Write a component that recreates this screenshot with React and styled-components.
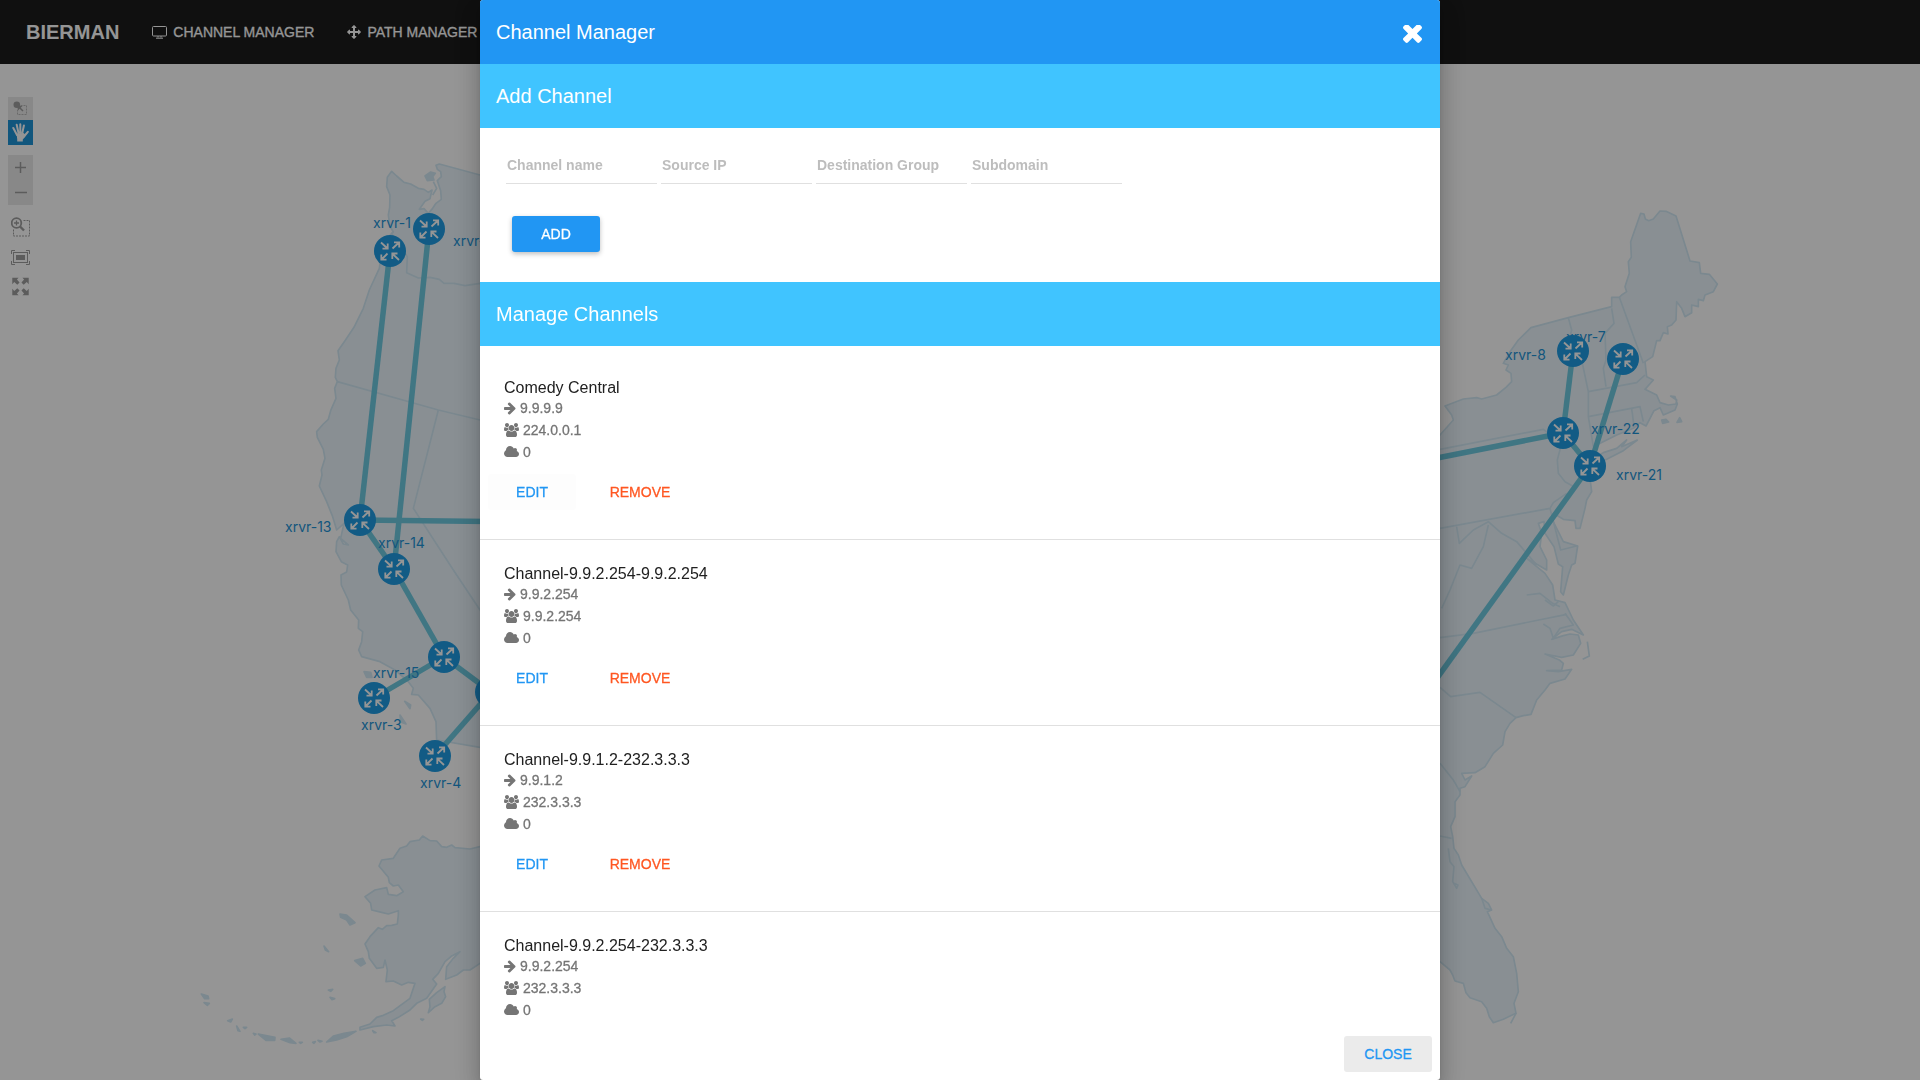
import React from "react";
import styled, { createGlobalStyle, css } from "styled-components";

const GlobalStyle = createGlobalStyle`
  *, *::before, *::after { box-sizing: border-box; }
  body {
    margin: 0;
    background: #fff;
    font-family: "Liberation Sans", Arial, sans-serif;
    font-size: 14px;
  }
  button, input { font: inherit; }
`;

/* Halfway between the regular and the bold face. */
const medium = css`
  -webkit-text-stroke: 0.02em currentColor;
`;

/* ---------- page behind the dialog ---------- */

const Page = styled.div`
  height: 100vh;
  overflow: hidden;
  display: flex;
  flex-direction: column;
`;

const NavBar = styled.nav`
  display: flex;
  align-items: center;
  flex: none;
  height: 64px;
  padding: 0 26px;
  gap: 33px;
  background: #000;
  color: #fff;
`;

const Brand = styled.a`
  color: inherit;
  text-decoration: none;
  font-size: 20px;
  line-height: 24px;
  font-weight: 700;
`;

const NavLink = styled.a`
  ${medium}
  display: flex;
  align-items: center;
  gap: 6px;
  color: inherit;
  text-decoration: none;
  white-space: nowrap;
`;

const Stage = styled.main`
  position: relative;
  flex: 1;
  min-height: 0;
`;

const Topology = styled.svg`
  display: block;
  width: 100%;
`;

const NodeLabel = styled.text`
  font-family: Inter, sans-serif;
  font-size: 14px;
  fill: #0587d2;
`;

const ToolBar = styled.div`
  position: absolute;
  top: 33px;
  left: 8px;
  width: 25px;
  display: flex;
  flex-direction: column;
  gap: 10px;
`;

const ToolGroup = styled.div`
  display: flex;
  flex-direction: column;
  background: ${(p) => (p.$plain ? "transparent" : "#e6e6e6")};
`;

const ToolButton = styled.button`
  display: grid;
  place-items: center;
  width: 25px;
  height: ${(p) => p.$height || 25}px;
  padding: 0;
  border: 0;
  color: ${(p) => (p.$active ? "#fff" : "#939393")};
  background: ${(p) => (p.$active ? "#0386d2" : "transparent")};
`;

/* ---------- dialog ---------- */

const Backdrop = styled.div`
  position: fixed;
  inset: 0;
  display: flex;
  justify-content: center;
  background: rgba(33, 33, 33, 0.48);
`;

const Dialog = styled.section`
  display: flex;
  flex-direction: column;
  width: 50%;
  height: 100%;
  overflow: hidden;
  border-radius: 3px;
  background: #fff;
  box-shadow: 0 7px 8px -4px rgba(0, 0, 0, 0.2),
    0 13px 19px 2px rgba(0, 0, 0, 0.14), 0 5px 24px 4px rgba(0, 0, 0, 0.12);
`;

const Bar = styled.header`
  display: flex;
  align-items: center;
  justify-content: space-between;
  flex: none;
  height: 64px;
  padding: 0 16px;
  color: #fff;
  background: ${(p) => (p.$primary ? "#2196f3" : "#40c4ff")};
`;

const BarTitle = styled.h2`
  margin: 0;
  font-size: 20px;
  line-height: 24px;
  font-weight: 400;
`;

const IconButton = styled.button`
  display: grid;
  place-items: center;
  width: 24px;
  height: 24px;
  padding: 4px 0 0;
  border: 0;
  background: none;
  color: inherit;
`;

const Body = styled.div`
  flex: 1;
  min-height: 0;
  overflow-y: auto;
  scrollbar-width: none;
`;

const Form = styled.form`
  padding: 24px 26px 30px;
`;

const Fields = styled.div`
  display: flex;
  gap: 4px;
`;

const Field = styled.input`
  width: 151px;
  height: 32px;
  padding: 0 1px 6px;
  border: 0;
  border-bottom: 1px solid #e0e0e0;
  background: none;
  font-weight: 700;
  line-height: 18px;
  &::placeholder {
    color: #bdbdbd;
    opacity: 1;
  }
`;

const Button = styled.button`
  ${medium}
  min-width: 88px;
  height: 36px;
  padding: 0 6px;
  border: 0;
  border-radius: 3px;
  line-height: 36px;
  text-transform: uppercase;
  color: ${(p) => (p.$warn ? "#ff5722" : "#2196f3")};
  background: ${(p) => p.$fill || "transparent"};
`;

const RaisedButton = styled(Button)`
  margin: 32px 6px 0;
  color: #fff;
  background: #2196f3;
  box-shadow: 0 2px 5px rgba(0, 0, 0, 0.26);
`;

const List = styled.ul`
  margin: 0;
  padding: 8px 0;
  list-style: none;
`;

const Item = styled.li`
  height: 186px;
  padding: 23px 24px 0;
  border-bottom: 1px solid #e0e0e0;
`;

const ItemTitle = styled.h3`
  margin: 0;
  padding-top: 2px;
  font-size: 16px;
  line-height: 18px;
  font-weight: 400;
  color: #212121;
`;

const Detail = styled.p`
  ${medium}
  display: flex;
  align-items: center;
  gap: 4px;
  margin: 0;
  line-height: 22px;
  color: #757575;
`;

const ItemActions = styled.div`
  display: flex;
  gap: 20px;
  margin: 11px -16px 0;
`;

const Footer = styled.footer`
  display: flex;
  justify-content: flex-end;
  flex: none;
  padding: 8px;
`;

/* ---------- icons ---------- */

const Glyph = ({ box, w, h, d }) => (
  <svg viewBox={box} width={w} height={h} fill="currentColor" aria-hidden="true">
    <path d={d} />
  </svg>
);

const ArrowIcon = () => (
  <Glyph
    box="0 128 1536 1664"
    w={12}
    h={13}
    d="M1472 960q0 54-37 91l-651 651q-39 37-91 37-51 0-90-37l-75-75q-38-38-38-91t38-91l293-293h-704q-52 0-84.500-37.500t-32.500-90.500v-128q0-53 32.500-90.500t84.500-37.500h704l-293-294q-38-36-38-90t38-90l75-75q38-38 90-38 53 0 91 38l651 651q37 35 37 90z"
  />
);

const UsersIcon = () => (
  <Glyph
    box="0 0 1920 1792"
    w={15}
    h={14}
    d="M593 896q-162 5-265 128h-134q-82 0-138-40.500t-56-118.500q0-353 124-353 6 0 43.500 21t97.500 42.500 119 21.500q67 0 133-23-5 37-5 66 0 139 81 256zM1664 1533q0 120-73 189.500t-194 69.500h-874q-121 0-194-69.500t-73-189.500q0-53 3.500-103.500t14-109 26.500-108.500 43-97.500 62-81 85.500-53.500 111.500-20q10 0 43 21.500t73 48 107 48 135 21.500 135-21.500 107-48 73-48 43-21.500q61 0 111.500 20t85.500 53.500 62 81 43 97.500 26.500 108.500 14 109 3.500 103.500zM640 256q0 106-75 181t-181 75-181-75-75-181 75-181 181-75 181 75 75 181zM1344 640q0 159-112.500 271.500t-271.500 112.500-271.500-112.500-112.500-271.500 112.500-271.500 271.500-112.500 271.500 112.500 112.500 271.500zM1920 865q0 78-56 118.500t-138 40.500h-134q-103-123-265-128 81-117 81-256 0-29-5-66 66 23 133 23 59 0 119-21.500t97.500-42.500 43.500-21q124 0 124 353zM1792 256q0 106-75 181t-181 75-181-75-75-181 75-181 181-75 181 75 75 181z"
  />
);

const CloudIcon = () => (
  <Glyph
    box="0 128 1920 1792"
    w={15}
    h={14}
    d="M1920 1280q0 159-112.500 271.500t-271.500 112.500h-1088q-185 0-316.500-131.500t-131.500-316.500q0-130 70-240t188-165q-2-30-2-43 0-212 150-362t362-150q156 0 285.500 87t188.500 231q71-62 166-62 106 0 181 75t75 181q0 76-41 138 130 31 213.500 135.500t83.500 238.500z"
  />
);

const CloseIcon = () => (
  <Glyph
    box="110 434 1188 1188"
    w={19}
    h={19}
    d="M1298 1322q0 40-28 68l-136 136q-28 28-68 28t-68-28l-294-294-294 294q-28 28-68 28t-68-28l-136-136q-28-28-28-68t28-68l294-294-294-294q-28-28-28-68t28-68l136-136q28-28 68-28t68 28l294 294 294-294q28-28 68-28t68 28l136 136q28 28 28 68t-28 68l-294 294 294 294q28 28 28 68z"
  />
);

const MoveIcon = () => (
  <Glyph
    box="0 0 1792 1792"
    w={14}
    h={14}
    d="M1792 896q0 26-19 45l-256 256q-19 19-45 19t-45-19-19-45v-128h-384v384h128q26 0 45 19t19 45-19 45l-256 256q-19 19-45 19t-45-19l-256-256q-19-19-19-45t19-45 45-19h128v-384h-384v128q0 26-19 45t-45 19-45-19l-256-256q-19-19-19-45t19-45l256-256q19-19 45-19t45 19 19 45v128h384v-384h-128q-26 0-45-19t-19-45 19-45l256-256q19-19 45-19t45 19l256 256q19 19 19 45t-19 45-45 19h-128v384h384v-128q0-26 19-45t45-19 45 19l256 256q19 19 19 45z"
  />
);

const MonitorIcon = () => (
  <svg width="15" height="13" viewBox="0 0 15 13" fill="none" stroke="currentColor" aria-hidden="true">
    <rect x=".5" y=".5" width="14" height="9.500" rx="1" />
    <path d="M6 10v1.500M9 10v1.500M4 12.200h7" />
  </svg>
);

const HandIcon = () => (
  <svg width="17" height="19" viewBox="0 0 17 19" fill="none" stroke="currentColor" strokeLinecap="round" aria-hidden="true">
    <path d="M4.500 10.500 11.500 10 14 12l-1.500 2.500-1.700 2V18.500H5.200V16Z" fill="currentColor" stroke="none" />
    <path d="M1.300 5 5 12M4.700 1.800 6.500 10M8.300 1.200V10M11.900 2.500 10.300 10" strokeWidth="2" />
    <path d="M15.800 8.800 12 13.500" strokeWidth="2" />
  </svg>
);

const SelectIcon = () => (
  <svg width="15" height="15" viewBox="0 0 15 15" fill="none" stroke="currentColor" aria-hidden="true">
    <rect x="4.500" y="4.500" width="9" height="9" strokeDasharray="2 1" strokeWidth=".7" />
    <circle cx="3.800" cy="3.800" r="3.300" fill="currentColor" stroke="none" />
    <path d="M4 4l6 6" strokeWidth="1.500" />
    <path d="M5 9.500V5h4.500Z" fill="currentColor" stroke="none" />
  </svg>
);

const PlusIcon = () => (
  <svg width="11" height="11" viewBox="0 0 11 11" stroke="currentColor" strokeWidth="1.500" aria-hidden="true">
    <path d="M0 5.500h11M5.500 0v11" />
  </svg>
);

const MinusIcon = () => (
  <svg width="12" height="3" viewBox="0 0 12 3" stroke="currentColor" strokeWidth="1.500" aria-hidden="true">
    <path d="M0 1.500h12" />
  </svg>
);

const ZoomAreaIcon = () => (
  <svg width="19" height="20" viewBox="0 0 19 20" fill="none" stroke="currentColor" aria-hidden="true">
    <path d="M12.500 3.500h6v15.500h-16V12" strokeDasharray="2 1" />
    <circle cx="5.500" cy="6" r="4.800" strokeWidth="1.800" />
    <path d="M3 6h5M5.500 3.500v5" strokeWidth="1.300" />
    <path d="M9 9.500l4 4" strokeWidth="2.400" />
  </svg>
);

const FitIcon = () => (
  <svg width="19" height="15" viewBox="0 0 19 15" fill="none" stroke="currentColor" aria-hidden="true">
    <path d="M.5 4V.5H4M15 .5h3.500V4M18.500 11v3.500H15M4 14.500H.5V11" />
    <rect x="2.500" y="2.500" width="14" height="10" />
    <rect x="5.500" y="5.500" width="8" height="4" fill="currentColor" />
  </svg>
);

const ExpandIcon = () => (
  <svg width="17" height="19" viewBox="0 0 18 19" fill="currentColor" aria-hidden="true">
    {[0, 1, 2, 3].map((i) => (
      <path
        key={i}
        d="M.3.3H7L5.200 2.200 8 5.200 5.600 7.600 2.400 4.800.3 7Z"
        transform={`translate(${i % 2 ? 18 : 0} ${i > 1 ? 19 : 0}) scale(${i % 2 ? -1 : 1} ${i > 1 ? -1 : 1})`}
      />
    ))}
  </svg>
);

/* ---------- map ---------- */

/* The map sheets are digitised at three units to the pixel; each sheet has its own origin. */
const SHEETS = {
  nw: [0, 0],
  west: [840, 720],
  sw: [840, 1680],
  ak: [540, 2340],
  ne: [4290, 540],
  se: [4290, 1800],
};

const trace = (...runs) =>
  "M" +
  runs
    .map(([sheet, points]) =>
      points
        .split(" ")
        .map((p) => {
          const [x, y] = p.split(",").map(Number);
          return `${x + SHEETS[sheet][0]} ${y + SHEETS[sheet][1]}`;
        })
        .join("L")
    )
    .join("L");

const LAND = [
  trace(
    ["nw", "1560,555 1440,525 1318,492 1308,496 1312,508 1322,515 1324,530 1312,542 1322,572 1324,598 1308,610 1298,625 1285,640 1272,626 1258,628 1275,604 1290,596 1296,570 1285,577 1272,568 1255,565 1232,552 1212,547 1190,528 1175,514 1162,532 1160,560 1170,585 1169,622 1165,645 1170,680 1180,695 1165,712 1158,750 1140,790"],
    ["west", "298,85 268,150 250,205 222,262 195,302 174,332 178,360 168,385 166,412 172,425 164,445 168,475 152,512 145,538 130,552 110,575 112,592 130,628 135,655 124,690 126,705 118,738 140,785 158,830 170,870 192,850 182,895 205,915 190,912 178,890 170,905 168,935 184,965 203,975"],
    ["sw", "200,36 183,45 184,75 205,120 212,150 236,180 235,205 248,215 245,245 236,270 245,290 300,305 345,330 385,365 400,385 395,403 415,405 450,445 468,485 470,540 600,562 720,575"]
  ) + "Z",
  trace([
    "ak",
    "980,200 900,200 870,207 825,203 815,195 800,202 785,200 770,183 750,182 728,168 718,180 690,185 680,198 660,205 640,235 605,240 597,258 625,292 628,308 640,318 655,315 670,335 650,347 625,343 620,323 585,330 555,350 572,370 575,390 605,397 625,402 655,392 655,405 652,432 635,436 620,437 607,448 595,443 570,470 555,492 565,515 568,535 590,565 610,562 615,540 622,570 618,605 640,603 665,615 685,607 705,610 690,655 640,692 610,706 590,712 570,732 540,742 540,750 580,740 620,735 645,738 635,722 655,712 690,690 710,670 740,655 770,612 758,598 775,580 795,545 815,528 840,515 820,535 800,560 797,598 830,585 850,570 870,570 900,550 980,540",
  ]) + "Z",
  trace(["ak", "795,620 770,638 748,658 750,680 745,698 765,680 785,670 797,650 792,635"]) + "Z",
  trace(
    ["ne", "-60,830 30,765 70,720 65,705 45,678 100,657 140,653 155,657 200,645 228,622 245,605 243,580 228,570 235,555 220,550 240,515 265,480 303,443 415,413 545,380 545,352 568,352 575,345 590,335 585,320 598,280 595,245 604,232 602,185 632,100 642,102 646,117 656,122 670,117 690,93 708,94 738,108 780,243 808,248 812,280 838,283 862,312 850,335 825,345 820,362 805,358 805,380 785,375 785,398 765,410 755,385 740,365 738,420 725,435 712,440 714,462 700,458 690,482 680,482 668,530 645,545 650,590 670,600 645,628 680,645 690,668 715,675 738,672 740,660 722,648 735,650 742,672 735,690 700,705 690,683 672,692 660,715 648,738 630,728 610,745 560,765 500,795 490,840 478,880 485,935 470,960 465,985 450,1045 438,1045 435,1022 400,1018 370,1000 365,1015 380,1045 400,1085 443,1098 435,1150 425,1155 415,1185 400,1245 392,1235 398,1160 385,1152 372,1100 345,1060 342,1025 325,1030 335,1060 330,1100 350,1140 350,1170 290,1135 345,1180 368,1215 375,1260 405,1268"],
    ["se", "430,60 460,105 425,88 395,95 365,118 400,107 420,102 445,105 452,130 430,165 395,172 345,162 388,180 400,190 395,210 350,212 385,215 425,208 405,237 360,250 345,270 320,300 303,343 280,347 258,353 240,370 225,395 218,435 190,460 165,500 135,518 95,520 105,540 125,528 105,560 90,565 90,585 75,605 75,650 62,680 68,710 72,745 85,765 95,795 155,895 175,910 185,930 172,935 195,985 215,1010 230,1045 250,1070 260,1120 265,1175 252,1210 258,1240 240,1248 220,1258 190,1268 178,1250 170,1225 155,1205 120,1193 108,1178 100,1150 75,1143 68,1125 60,1110 30,1085 -60,1040"]
  ) + "Z",
  trace(["ne", "497,830 520,818 560,805 590,780 575,800 622,780 580,812 530,838 505,842"]) + "Z",
];

const BORDERS = [
  trace(["nw", "1180,695 1175,702 1222,770 1220,818 1255,834 1290,832 1318,838 1332,850 1362,850 1395,857 1440,850 1520,855"]),
  trace(["west", "172,425 475,510 600,540 680,560"]),
  trace(["west", "475,510 400,805 520,990"], ["sw", "600,150 680,260"]),
  trace(["nw", "1300,545 1310,565 1298,585"]),
  trace(["ne", "30,808 340,748 395,790 382,840 385,880 405,905 440,925"]),
  trace(["ne", "415,413 425,450 420,470 455,540 475,635 475,710 490,800"]),
  trace(["ne", "475,635 620,608 645,585"]),
  trace(["ne", "475,710 630,680 640,725"]),
  trace(["ne", "605,685 612,740"]),
  trace(["ne", "545,385 552,430 525,460 528,540 520,565 528,620"]),
  trace(["ne", "568,352 640,550"]),
  trace(["ne", "30,1045 360,985 370,968 410,940"]),
  trace(["ne", "360,985 392,1110 440,1098"]),
  trace(["ne", "80,1040 88,1090 130,1050 175,1025 215,1060 260,1085 290,1120 320,1155"]),
  trace(["ne", "175,1035 160,1100 125,1165 90,1155 60,1230 35,1285"]),
  trace(["ne", "290,1245 330,1240 368,1270 390,1280"]),
  trace(["se", "30,113 130,100 410,43"]),
  trace(["se", "345,0 370,18 385,5"]),
  trace(["se", "340,72 360,85 370,115 390,85 430,75 405,40"]),
  trace(["se", "30,262 62,290 150,277 258,353"]),
  trace(["se", "30,490 70,540 90,575"]),
  trace(["se", "30,708 65,715"]),
  trace(["se", "55,745 60,785 72,800 68,845 80,865 84,855 72,850"]),
  trace(["se", "472,125 478,168 458,178"]),
  trace(["se", "258,1240 242,1270"]),
  trace(["se", "155,895 165,925 185,930"]),
];

const ISLANDS = [
  ["nw", "1275,528 1292,516 1306,520 1298,530 1302,540 1282,542"],
  ["sw", "252,335 272,337 276,352 260,352"],
  ["sw", "374,424 392,435 390,446"],
  ["sw", "360,465 378,492 362,486"],
  ["ak", "480,402 500,405 525,428 510,435 500,420 482,412"],
  ["ak", "432,498 446,515 436,510"],
  ["ak", "524,542 548,535 556,550 542,558"],
  ["ak", "445,630 458,628 452,634"],
  ["ak", "450,652 464,656 456,659"],
  ["ak", "64,642 84,648 86,656 74,656"],
  ["ak", "72,668 88,670 82,676"],
  ["ak", "143,722 157,717 152,726"],
  ["ak", "170,738 180,754 174,752"],
  ["ak", "190,742 200,742 195,746"],
  ["ak", "220,760 228,762 224,765"],
  ["ak", "235,762 285,772 284,781 258,781"],
  ["ak", "303,778 328,774 348,790 330,788"],
  ["ak", "358,787 367,787 362,790"],
  ["ak", "398,787 406,785 402,790"],
  ["ak", "414,781 426,784 420,786"],
  ["ak", "440,786 460,768 492,760 528,754 500,770 470,780"],
  ["ak", "578,752 588,758 582,758"],
  ["ak", "722,717 731,718 727,721"],
  ["ne", "695,720 708,718 716,726 698,730"],
  ["ne", "741,727 749,713 755,725"],
].map((run) => trace(run) + "Z");

const NODES = [
  { x: 390, y: 251, label: "xrvr-1", lx: 373, ly: 228 },
  { x: 429, y: 229, label: "xrvr-2", lx: 453, ly: 246 },
  { x: 360, y: 520, label: "xrvr-13", lx: 285, ly: 532 },
  { x: 394, y: 569, label: "xrvr-14", lx: 378, ly: 548 },
  { x: 444, y: 657, label: "xrvr-15", lx: 373, ly: 678 },
  { x: 374, y: 698, label: "xrvr-3", lx: 361, ly: 730 },
  { x: 435, y: 756, label: "xrvr-4", lx: 420, ly: 788 },
  { x: 491, y: 692 },
  { x: 1573, y: 351, label: "xrvr-8", lx: 1505, ly: 360 },
  { x: 1623, y: 359, label: "xrvr-7", lx: 1566, ly: 342 },
  { x: 1563, y: 433, label: "xrvr-22", lx: 1591, ly: 434 },
  { x: 1590, y: 466, label: "xrvr-21", lx: 1616, ly: 480 },
  { x: 1300, y: 868 },
  { x: 1200, y: 505 },
  { x: 620, y: 523 },
];

const LINKS = [
  [0, 2], [1, 3], [2, 3], [3, 4], [4, 5], [4, 7], [7, 6], [2, 14],
  [8, 10], [9, 11], [10, 11], [10, 13], [11, 12],
];

const NetworkMap = () => (
  <Topology viewBox="0 64 1920 1016" role="img" aria-label="Network topology">
    <g transform="scale(.333333)" strokeWidth="5" strokeLinejoin="round" stroke="#cde6f3">
      {LAND.map((d) => <path key={d} d={d} fill="#e8f4fc" />)}
      {BORDERS.map((d) => <path key={d} d={d} fill="none" />)}
      {ISLANDS.map((d) => <path key={d} d={d} fill="#cde6f3" />)}
    </g>
    <g stroke="#5dc3dc" strokeWidth="5.500">
      {LINKS.map(([a, b]) => (
        <line key={`${a}-${b}`} x1={NODES[a].x} y1={NODES[a].y} x2={NODES[b].x} y2={NODES[b].y} />
      ))}
    </g>
    {NODES.filter((n) => n.label).map((n) => (
      <NodeLabel key={n.label} x={n.lx} y={n.ly}>{n.label}</NodeLabel>
    ))}
    {NODES.map((n) => (
      <g key={`${n.x}-${n.y}`} transform={`translate(${n.x} ${n.y})`}>
        <circle r="16" fill="#0591e0" />
        <path
          d="M-9 -8.500L-2.500 -2.500M-7.500 -2.300H-2.300V-7.500M2.500 -2.500L9 -8.500M4 -8.700H9.200V-3.500M-2.500 2.500L-8.500 8.500M-8.700 3.500V8.700H-3.500M9 9L2.500 2.800M2.300 8V2.500H7.500"
          fill="none"
          stroke="#fff"
          strokeWidth="1.800"
        />
      </g>
    ))}
  </Topology>
);

/* ---------- data ---------- */

const FIELDS = ["Channel name", "Source IP", "Destination Group", "Subdomain"];

const CHANNELS = [
  { name: "Comedy Central", source: "9.9.9.9", group: "224.0.0.1", subdomain: 0 },
  { name: "Channel-9.9.2.254-9.9.2.254", source: "9.9.2.254", group: "9.9.2.254", subdomain: 0 },
  { name: "Channel-9.9.1.2-232.3.3.3", source: "9.9.1.2", group: "232.3.3.3", subdomain: 0 },
  { name: "Channel-9.9.2.254-232.3.3.3", source: "9.9.2.254", group: "232.3.3.3", subdomain: 0 },
];

const ChannelItem = ({ channel, highlighted }) => (
  <Item>
    <ItemTitle>{channel.name}</ItemTitle>
    <Detail><ArrowIcon />{channel.source}</Detail>
    <Detail><UsersIcon />{channel.group}</Detail>
    <Detail><CloudIcon />{channel.subdomain}</Detail>
    <ItemActions>
      <Button type="button" $fill={highlighted ? "#fdfdfd" : undefined}>Edit</Button>
      <Button type="button" $warn>Remove</Button>
    </ItemActions>
  </Item>
);

export default function App() {
  return (
    <>
      <GlobalStyle />
      <Page>
        <NavBar>
          <Brand href="#home">BIERMAN</Brand>
          <NavLink href="#channels"><MonitorIcon />CHANNEL MANAGER</NavLink>
          <NavLink href="#paths"><MoveIcon />PATH MANAGER</NavLink>
        </NavBar>
        <Stage>
          <NetworkMap />
          <ToolBar>
            <ToolGroup>
              <ToolButton $height={23} aria-label="Select"><SelectIcon /></ToolButton>
              <ToolButton $active aria-label="Move"><HandIcon /></ToolButton>
            </ToolGroup>
            <ToolGroup>
              <ToolButton aria-label="Zoom in"><PlusIcon /></ToolButton>
              <ToolButton aria-label="Zoom out"><MinusIcon /></ToolButton>
            </ToolGroup>
            <ToolGroup $plain>
              <ToolButton $height={23} aria-label="Zoom to area"><ZoomAreaIcon /></ToolButton>
              <ToolButton $height={38} aria-label="Fit stage"><FitIcon /></ToolButton>
              <ToolButton $height={20} aria-label="Full screen"><ExpandIcon /></ToolButton>
            </ToolGroup>
          </ToolBar>
        </Stage>
      </Page>

      <Backdrop>
        <Dialog role="dialog" aria-modal="true" aria-labelledby="dialog-title">
          <Bar $primary>
            <BarTitle id="dialog-title">Channel Manager</BarTitle>
            <IconButton type="button" aria-label="Close dialog"><CloseIcon /></IconButton>
          </Bar>
          <Body>
            <Bar><BarTitle>Add Channel</BarTitle></Bar>
            <Form onSubmit={(e) => e.preventDefault()}>
              <Fields>
                {FIELDS.map((name) => (
                  <Field key={name} type="text" aria-label={name} placeholder={name} />
                ))}
              </Fields>
              <RaisedButton type="submit">Add</RaisedButton>
            </Form>
            <Bar><BarTitle>Manage Channels</BarTitle></Bar>
            <List>
              {CHANNELS.map((channel, i) => (
                <ChannelItem key={channel.name} channel={channel} highlighted={i === 0} />
              ))}
            </List>
          </Body>
          <Footer>
            <Button type="button" $fill="#ebebeb">Close</Button>
          </Footer>
        </Dialog>
      </Backdrop>
    </>
  );
}
